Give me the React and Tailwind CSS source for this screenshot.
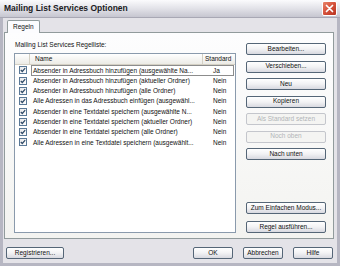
import React from 'react';

const rules = [
  { name: 'Absender in Adressbuch hinzufügen (ausgewählte Na...', std: 'Ja', focus: true },
  { name: 'Absender in Adressbuch hinzufügen (aktueller Ordner)', std: 'Nein' },
  { name: 'Absender in Adressbuch hinzufügen (alle Ordner)', std: 'Nein' },
  { name: 'Alle Adressen in das Adressbuch einfügen (ausgewähl...', std: 'Nein' },
  { name: 'Absender in eine Textdatei speichern (ausgewählte N...', std: 'Nein' },
  { name: 'Absender in eine Textdatei speichern (aktueller Ordner)', std: 'Nein' },
  { name: 'Absender in eine Textdatei speichern (alle Ordner)', std: 'Nein' },
  { name: 'Alle Adressen in eine Textdatei speichern (ausgewählt...', std: 'Nein' },
];

const Btn = ({ children, disabled, className = '' }) => (
  <div
    className={`h-[12px] flex items-center justify-center rounded-[2px] border text-[6.5px] leading-none ${
      disabled
        ? 'border-[#c4c6cc] bg-[#f4f4f2] text-[#b2b4b8]'
        : 'border-[#556677] bg-gradient-to-b from-[#ffffff] via-[#f2f2f4] to-[#d8d9e0] text-[#111]'
    } ${className}`}
  >
    {children}
  </div>
);

const Check = () => (
  <span className="w-[8px] h-[8px] border border-[#5a7896] bg-gradient-to-br from-[#e8e8ea] to-white flex items-center justify-center">
    <svg width="6" height="6" viewBox="0 0 6 6">
      <path d="M0.8 3 L2.3 4.5 L5.2 1.2" fill="none" stroke="#2f4a66" strokeWidth="1.2" />
    </svg>
  </span>
);

export default function App() {
  return (
    <div className="w-[340px] h-[266px] flex flex-col overflow-hidden font-['Liberation_Sans',Arial,sans-serif] text-[#111]">
      <div className="h-[18px] flex items-center justify-between pl-[4px] pr-[3px] bg-gradient-to-b from-[#fbfbfd] via-[#e2e2e8] to-[#c6c6d0] border-b border-[#a8a8b4]">
        <span className="text-[8.5px] font-bold text-[#1a1a22]">Mailing List Services Optionen</span>
        <span className="w-[15px] h-[15px] rounded-[2px] border border-white bg-gradient-to-br from-[#e8836a] via-[#d4503a] to-[#b8331f] flex items-center justify-center">
          <svg width="9" height="9" viewBox="0 0 9 9">
            <path d="M1.5 1.5 L7.5 7.5 M7.5 1.5 L1.5 7.5" stroke="white" strokeWidth="1.7" strokeLinecap="round" />
          </svg>
        </span>
      </div>
      <div className="flex-1 flex flex-col bg-[#e4e3e8] border-x-[3px] border-b-[3px] border-[#b6b6c2] px-[1px] pt-[2px]">
        <div className="flex pl-[3px]">
          <div className="relative z-10 -mb-px h-[13px] px-[5px] flex items-center bg-[#fcfcfe] border border-b-0 border-[#919b9c] rounded-t-[2px] text-[6.5px]">
            Regeln
          </div>
        </div>
        <div className="h-[207px] w-[330px] border border-[#919b9c] bg-gradient-to-b from-[#fdfdfe] to-[#f3f3f0] flex pl-[9px]">
          <div className="flex flex-col pt-[8px] w-[222px]">
            <div className="h-[8px] flex items-center text-[6.5px] pl-[1px]">Mailing List Services Regelliste:</div>
            <div className="mt-[4px] h-[180px] border border-[#8a9aac] bg-white flex flex-col">
              <div className="h-[10.5px] grid grid-cols-[15px_173px_1fr] bg-gradient-to-b from-white to-[#ecebe6] border-b border-[#d4d0c4] text-[6.5px]">
                <div className="border-r border-[#d4d0c4]" />
                <div className="border-r border-[#d4d0c4] flex items-center pl-[5px]">Name</div>
                <div className="flex items-center pl-[2px]">Standard</div>
              </div>
              {rules.map((r) => (
                <div key={r.name} className="h-[10.3px] grid grid-cols-[15px_1fr] text-[6.5px]">
                  <div className="flex items-center justify-center pl-[1px]">
                    <Check />
                  </div>
                  <div
                    className={`grid grid-cols-[172px_1fr] items-center ml-[1px] mr-[1px] min-w-0 ${
                      r.focus ? 'border border-[#8c8c8c]' : 'border border-transparent'
                    }`}
                  >
                    <span className="block min-w-0 overflow-hidden whitespace-nowrap pl-[1px]">{r.name}</span>
                    <span className="pl-[9px]">{r.std}</span>
                  </div>
                </div>
              ))}
            </div>
          </div>
          <div className="ml-[10px] w-[80px] flex flex-col pt-[10px] pb-[5px]">
            <div className="flex flex-col gap-[5.5px]">
              <Btn>Bearbeiten...</Btn>
              <Btn>Verschieben...</Btn>
              <Btn>Neu</Btn>
              <Btn>Kopieren</Btn>
              <Btn disabled>Als Standard setzen</Btn>
              <Btn disabled>Noch oben</Btn>
              <Btn>Nach unten</Btn>
            </div>
            <div className="mt-auto flex flex-col gap-[7px]">
              <Btn>Zum Einfachen Modus...</Btn>
              <Btn>Regel ausführen...</Btn>
            </div>
          </div>
        </div>
        <div className="flex items-center pt-[8px] pl-[2px] pr-[3px]">
          <Btn className="w-[58px]">Registrieren...</Btn>
          <div className="ml-auto flex gap-[10px]">
            <Btn className="w-[40px]">OK</Btn>
            <Btn className="w-[40px]">Abbrechen</Btn>
            <Btn className="w-[40px]">Hilfe</Btn>
          </div>
        </div>
      </div>
    </div>
  );
}
